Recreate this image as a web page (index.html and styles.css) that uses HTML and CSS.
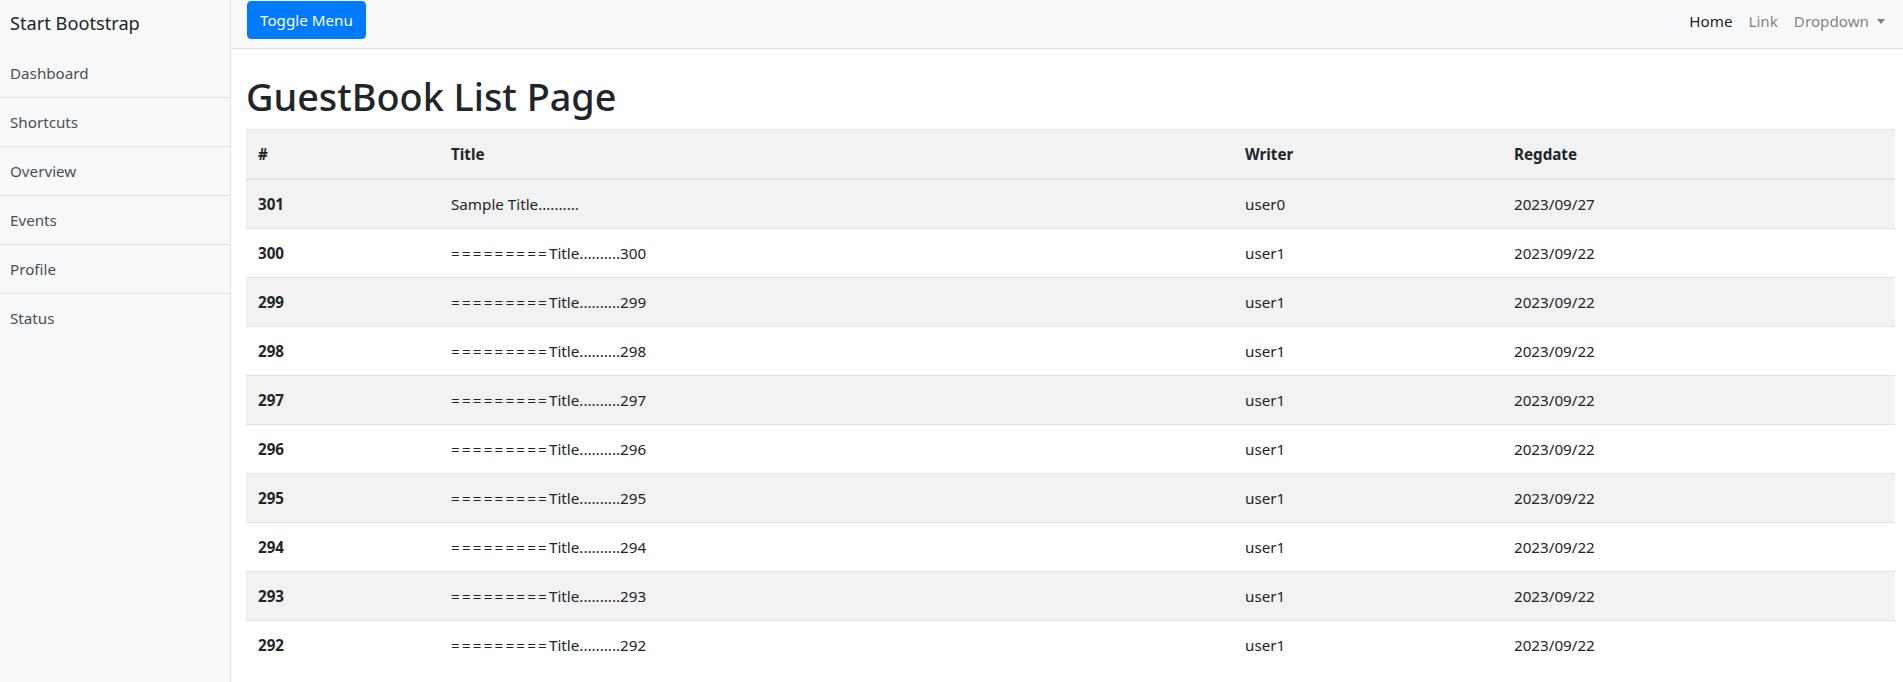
FILE: index.html
```html
<!DOCTYPE html>
<html lang="en">
<head>
    <meta charset="UTF-8">
    <meta name="viewport" content="width=device-width, initial-scale=1.0">
    <title>GuestBook List Page</title>
    <link rel="stylesheet" href="styles.css">
</head>
<body>
    <div class="wrapper">
        <!-- Sidebar -->
        <div class="sidebar">
            <div class="sidebar-heading">Start Bootstrap</div>
            <div class="list-group">
                <a href="#" class="list-group-item">Dashboard</a>
                <a href="#" class="list-group-item">Shortcuts</a>
                <a href="#" class="list-group-item">Overview</a>
                <a href="#" class="list-group-item">Events</a>
                <a href="#" class="list-group-item">Profile</a>
                <a href="#" class="list-group-item">Status</a>
            </div>
        </div>

        <!-- Page content -->
        <div class="page-content">
            <nav class="navbar">
                <button class="btn-primary" id="menu-toggle">Toggle Menu</button>
                <ul class="navbar-nav">
                    <li><a class="nav-link active" href="#">Home</a></li>
                    <li><a class="nav-link" href="#">Link</a></li>
                    <li><a class="nav-link dropdown-toggle" href="#">Dropdown</a></li>
                </ul>
            </nav>

            <div class="container-fluid">
                <h1>GuestBook List Page</h1>
                <table class="table">
                    <thead>
                        <tr>
                            <th class="col-num">#</th>
                            <th class="col-title">Title</th>
                            <th class="col-writer">Writer</th>
                            <th>Regdate</th>
                        </tr>
                    </thead>
                    <tbody>
                        <tr><th>301</th><td>Sample Title..........</td><td>user0</td><td>2023/09/27</td></tr>
                        <tr><th>300</th><td><span class="eq">=========</span>Title..........300</td><td>user1</td><td>2023/09/22</td></tr>
                        <tr><th>299</th><td><span class="eq">=========</span>Title..........299</td><td>user1</td><td>2023/09/22</td></tr>
                        <tr><th>298</th><td><span class="eq">=========</span>Title..........298</td><td>user1</td><td>2023/09/22</td></tr>
                        <tr><th>297</th><td><span class="eq">=========</span>Title..........297</td><td>user1</td><td>2023/09/22</td></tr>
                        <tr><th>296</th><td><span class="eq">=========</span>Title..........296</td><td>user1</td><td>2023/09/22</td></tr>
                        <tr><th>295</th><td><span class="eq">=========</span>Title..........295</td><td>user1</td><td>2023/09/22</td></tr>
                        <tr><th>294</th><td><span class="eq">=========</span>Title..........294</td><td>user1</td><td>2023/09/22</td></tr>
                        <tr><th>293</th><td><span class="eq">=========</span>Title..........293</td><td>user1</td><td>2023/09/22</td></tr>
                        <tr><th>292</th><td><span class="eq">=========</span>Title..........292</td><td>user1</td><td>2023/09/22</td></tr>
                    </tbody>
                </table>
            </div>
        </div>
    </div>
</body>
</html>
```

FILE: styles.css
```css
body {
    margin: 0;
    font-family: "Noto Sans", Arial, sans-serif;
    font-size: 15.2px;
    line-height: 24px;
    color: #212529;
    background-color: #fff;
}
a {
    text-decoration: none;
}
.wrapper {
    display: flex;
    min-height: 682px;
}
.sidebar {
    width: 230px;
    flex-shrink: 0;
    background-color: #f8f9fa;
    border-right: 1px solid #dee2e6;
}
.sidebar-heading {
    height: 49px;
    padding: 0 10px 3px;
    display: flex;
    align-items: center;
    font-size: 18.2px;
    color: #212529;
    box-sizing: border-box;
}
.list-group {
    display: flex;
    flex-direction: column;
}
.list-group-item {
    padding: 12px 10px;
    color: #495057;
    border-bottom: 1px solid #dee2e6;
}
.list-group-item:last-child {
    border-bottom: none;
}
.page-content {
    flex: 1;
    min-width: 0;
}
.navbar {
    display: flex;
    justify-content: space-between;
    align-items: flex-start;
    height: 49px;
    box-sizing: border-box;
    padding: 1px 10px 0 16px;
    background-color: #f8f9fa;
    border-bottom: 1px solid #dee2e6;
}
.btn-primary {
    background-color: #007bff;
    color: #fff;
    border: 1px solid #007bff;
    padding: 6px 12px;
    font-family: inherit;
    font-size: 15.2px;
    line-height: 24px;
    border-radius: 4px;
    cursor: pointer;
}
.navbar-nav {
    display: flex;
    list-style: none;
    margin: 0;
    padding: 0;
}
.nav-link {
    display: block;
    padding: 8px 8px;
    color: rgba(0, 0, 0, 0.5);
}
.nav-link.active {
    color: rgba(0, 0, 0, 0.9);
}
.dropdown-toggle::after {
    content: "";
    display: inline-block;
    margin-left: 8px;
    vertical-align: 3px;
    border-top: 5px solid;
    border-right: 4px solid transparent;
    border-left: 4px solid transparent;
}
.container-fluid {
    padding: 24px 8px 0 15px;
}
h1 {
    margin: 0 0 8px;
    font-size: 37.8px;
    font-weight: 500;
    line-height: 48px;
}
.table {
    width: 100%;
    border-collapse: collapse;
    color: #212529;
}
.table th,
.table td {
    padding: 12px;
    text-align: left;
    vertical-align: top;
    border-top: 1px solid #dee2e6;
}
.table thead th {
    border-bottom: 2px solid #dee2e6;
    background-color: #f2f2f2;
}
.table tbody tr:nth-of-type(odd) {
    background-color: #f2f2f2;
}
.eq {
    letter-spacing: 2.2px;
}
.col-num {
    width: 169px;
}
.col-title {
    width: 770px;
}
.col-writer {
    width: 245px;
}
```
